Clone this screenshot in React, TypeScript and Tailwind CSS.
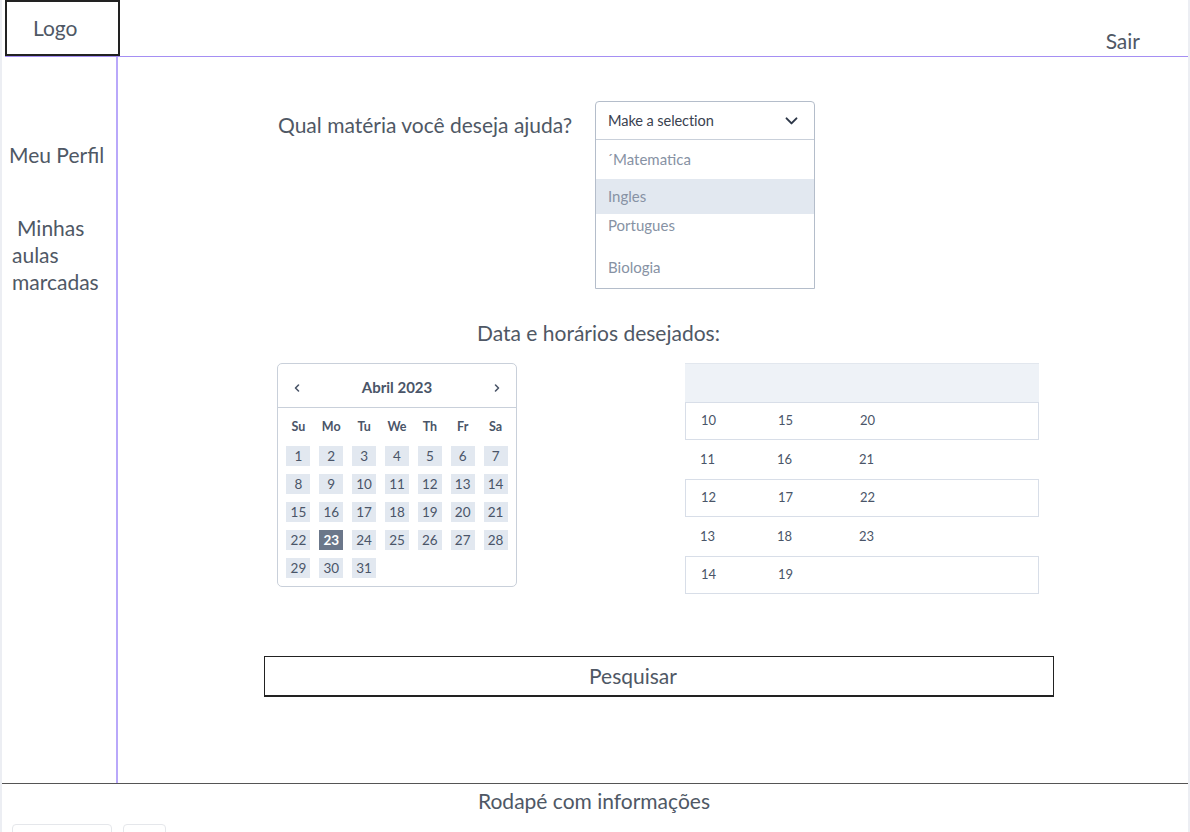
import React from "react";

const txt = "text-[#4f5865]";

function Chevron() {
  return (
    <svg width="17" height="17" viewBox="0 0 24 24" fill="none" stroke="#2d3748" strokeWidth="2.8" strokeLinecap="round" strokeLinejoin="round">
      <path d="M5 9l7 7 7-7" />
    </svg>
  );
}

function SmallChev({ dir }: { dir: "l" | "r" }) {
  return (
    <svg width="10" height="10" viewBox="0 0 10 10" fill="none" stroke="#4a5568" strokeWidth="1.6" strokeLinecap="round" strokeLinejoin="round">
      {dir === "l" ? <path d="M6.5 2L3.5 5l3 3" /> : <path d="M3.5 2l3 3-3 3" />}
    </svg>
  );
}

function Calendar() {
  const days: number[] = [];
  for (let i = 1; i <= 31; i++) days.push(i);
  const weeks = ["Su", "Mo", "Tu", "We", "Th", "Fr", "Sa"];
  return (
    <div className="w-[240px] h-[224px] border border-[#c9d0da] rounded-[5px] bg-white flex flex-col">
      <div className="h-[44px] shrink-0 border-b border-[#c9d0da] flex items-center justify-between pl-[14px] pr-[14px] pt-[4px] text-[#4a5568]">
        <SmallChev dir="l" />
        <span className="text-[15px] font-bold">Abril 2023</span>
        <SmallChev dir="r" />
      </div>
      <div className="px-[4px] pt-[4px]">
        <div className="grid grid-cols-7 h-[30px] items-center">
          {weeks.map((w) => (
            <div key={w} className="text-center text-[12.5px] font-bold text-[#4a5568]">{w}</div>
          ))}
        </div>
        <div className="grid grid-cols-7">
          {days.map((d) => (
            <div key={d} className="h-[28px] flex items-center justify-center">
              <div
                className={
                  "w-[24px] h-[20px] flex items-center justify-center text-[13.5px] " +
                  (d === 23 ? "bg-[#6b778a] text-white font-bold" : "bg-[#e2e8f0] text-[#4a5568]")
                }
              >
                {d}
              </div>
            </div>
          ))}
        </div>
      </div>
    </div>
  );
}

function Hours() {
  const rows: { v: string[]; b: boolean; h: string }[] = [
    { v: ["10", "15", "20"], b: true, h: "h-[38px]" },
    { v: ["11", "16", "21"], b: false, h: "h-[39px]" },
    { v: ["12", "17", "22"], b: true, h: "h-[38px]" },
    { v: ["13", "18", "23"], b: false, h: "h-[39px]" },
    { v: ["14", "19", ""], b: true, h: "h-[38px]" },
  ];
  return (
    <div className="w-[354px] flex flex-col">
      <div className="h-[39px] bg-[#eef2f7] border-t border-[#e2e7ee]" />
      {rows.map((r, i) => (
        <div
          key={i}
          className={
            r.h + " flex items-center pl-[15px] text-[13px] text-[#4a5568] " +
            (r.b ? "border border-[#d8dee8]" : "")
          }
        >
          <span className="w-[77px]">{r.v[0]}</span>
          <span className="w-[82px]">{r.v[1]}</span>
          <span>{r.v[2]}</span>
        </div>
      ))}
    </div>
  );
}

export default function App() {
  return (
    <div
      className={"w-[1190px] h-[832px] overflow-hidden bg-white flex flex-col border-l-2 border-r-2 border-[#eceef3] " + txt}
      style={{ fontFamily: "Lato, 'Noto Sans', sans-serif" }}
    >
      {/* Header */}
      <div className="h-[57px] shrink-0 ml-[3px] flex justify-between border-b border-[#a58ff3]">
        <div className="w-[115px] h-[56px] border-2 border-[#222] pl-[26px] pt-[13px] text-[21px] leading-[26px]">
          Logo
        </div>
        <div className="self-end pb-[2px] pr-[48px] text-[21px] leading-[26px]">Sair</div>
      </div>

      {/* Body */}
      <div className="h-[726px] shrink-0 flex">
        <div className="w-[116px] border-r-2 border-[#b9a8fa] text-[21px] leading-[27px] pt-[84px] pl-[7px]">
          <div className="whitespace-nowrap">Meu Perfil</div>
          <div className="mt-[46px] pl-[3px] w-[104px]">
            <div className="pl-[5px]">Minhas</div>
            <div>aulas</div>
            <div>marcadas</div>
          </div>
        </div>

        <div className="flex-1 pl-[146px] pt-[44px]">
          <div className="w-[789px] flex flex-col">
            {/* Question */}
            <div className="flex items-start ml-[14px]">
              <div className="w-[317px] h-[48px] flex items-center text-[21px] whitespace-nowrap">Qual matéria você deseja ajuda?</div>
              <div className="w-[220px] border border-[#b4bdca] rounded-t-[4px] bg-white">
                <div className="h-[38px] border-b border-[#c9d0da] flex items-center justify-between pl-[12px] pr-[14px]">
                  <span className="text-[14.6px] tracking-[-0.1px] text-[#3a4250]">Make a selection</span>
                  <Chevron />
                </div>
                <div className="text-[15px] text-[#8792a4]">
                  <div className="h-[39px] flex items-center pl-[11px]">´Matematica</div>
                  <div className="h-[35px] flex items-center pl-[12px] bg-[#e2e8f0]">Ingles</div>
                  <div className="h-[32px] pl-[12px] pt-[1px] leading-[20px]">Portugues</div>
                  <div className="h-[42px] flex items-center pl-[12px]">Biologia</div>
                </div>
              </div>
            </div>

            {/* Title */}
            <div className="mt-[31px] ml-[213px] text-[21px] leading-[26px] whitespace-nowrap">Data e horários desejados:</div>

            {/* Calendar + table */}
            <div className="mt-[17px] ml-[13px] flex items-start gap-[168px]">
              <Calendar />
              <Hours />
            </div>

            {/* Button */}
            <div className="mt-[62px] h-[41px] w-[790px] border border-[#222] border-b-2 flex items-center justify-center pr-[52px] text-[21px]">
              Pesquisar
            </div>
          </div>
        </div>
      </div>

      {/* Footer */}
      <div className="flex-1 min-h-0 overflow-hidden border-t border-[#555] flex flex-col">
        <div className="h-[33px] shrink-0 flex items-center justify-center text-[21px] pr-[2px]">Rodapé com informações</div>
        <div className="flex gap-[11px] ml-[10px] mt-[7px]">
          <div className="w-[100px] h-[20px] shrink-0 border border-[#e5e7eb] rounded-[4px]" />
          <div className="w-[43px] h-[20px] shrink-0 border border-[#e5e7eb] rounded-[4px]" />
        </div>
      </div>
    </div>
  );
}
